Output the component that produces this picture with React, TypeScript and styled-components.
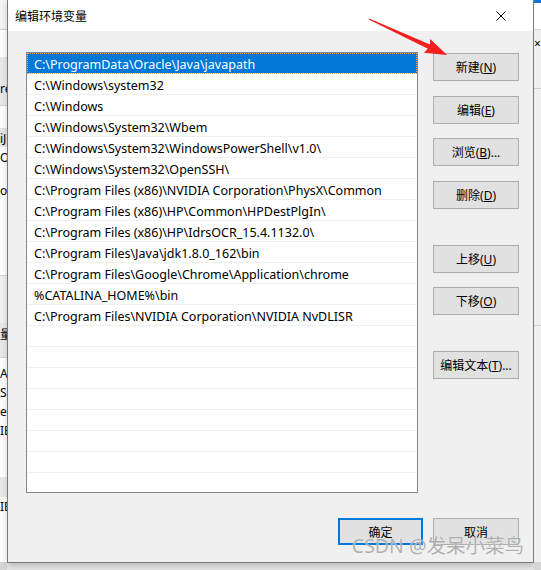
import React from "react";
import styled, { createGlobalStyle } from "styled-components";

const GlobalStyle = createGlobalStyle`
  html, body {
    margin: 0;
    padding: 0;
    background: #e6e6e6;
  }
  body {
    font-family: "Noto Sans", "Noto Sans CJK SC", sans-serif;
    font-size: 12px;
    color: #000000;
  }
`;

const paths = [
  "C:\\ProgramData\\Oracle\\Java\\javapath",
  "C:\\Windows\\system32",
  "C:\\Windows",
  "C:\\Windows\\System32\\Wbem",
  "C:\\Windows\\System32\\WindowsPowerShell\\v1.0\\",
  "C:\\Windows\\System32\\OpenSSH\\",
  "C:\\Program Files (x86)\\NVIDIA Corporation\\PhysX\\Common",
  "C:\\Program Files (x86)\\HP\\Common\\HPDestPlgIn\\",
  "C:\\Program Files (x86)\\HP\\IdrsOCR_15.4.1132.0\\",
  "C:\\Program Files\\Java\\jdk1.8.0_162\\bin",
  "C:\\Program Files\\Google\\Chrome\\Application\\chrome",
  "%CATALINA_HOME%\\bin",
  "C:\\Program Files\\NVIDIA Corporation\\NVIDIA NvDLISR",
];

const sideButtons = [
  { label: "新建", key: "N", suffix: "", top: 1 },
  { label: "编辑", key: "E", suffix: "", top: 15 },
  { label: "浏览", key: "B", suffix: "...", top: 14 },
  { label: "删除", key: "D", suffix: "", top: 15 },
  { label: "上移", key: "U", suffix: "", top: 36 },
  { label: "下移", key: "O", suffix: "", top: 14 },
  { label: "编辑文本", key: "T", suffix: "...", top: 36 },
];

// slivers of the window behind the dialog
const leftSegments = [
  { h: 29, bg: "#f3f3f3", text: "" },
  { h: 1, bg: "#cfcfcf", text: "" },
  { h: 27, bg: "#ffffff", text: "" },
  { h: 48, bg: "#e8e8e8", text: "re", pad: 22 },
  { h: 1, bg: "#d4d4d4", text: "" },
  { h: 22, bg: "#ffffff", text: "" },
  { h: 19, bg: "#e5e5e5", text: "iJ", pad: 1 },
  { h: 22, bg: "#ffffff", text: "Or", pad: 1 },
  { h: 106, bg: "#ffffff", text: "o", pad: 12 },
  { h: 1, bg: "#d4d4d4", text: "" },
  { h: 47, bg: "#f0f0f0", text: "" },
  { h: 34, bg: "#e8e8e8", text: "量", pad: 2 },
  { h: 1, bg: "#d4d4d4", text: "" },
  { h: 119, bg: "#ffffff", text: "AL\nSp\ner\nIE", pad: 6 },
  { h: 20, bg: "#e8e8e8", text: "" },
  { h: 65, bg: "#ffffff", text: "IE", pad: 0 },
  { h: 8, bg: "#d6d6d6", text: "" },
];

const rightSegments = [
  { h: 3, bg: "#0078d7", text: "" },
  { h: 26, bg: "#ffffff", text: "" },
  { h: 1, bg: "#d9d9d9", text: "" },
  { h: 58, bg: "#f0f0f0", text: "×", pad: 4 },
  { h: 1, bg: "#d0d0d0", text: "" },
  { h: 236, bg: "#f0f0f0", text: "" },
  { h: 1, bg: "#d0d0d0", text: "" },
  { h: 236, bg: "#f0f0f0", text: "" },
  { h: 8, bg: "#d6d6d6", text: "" },
];

export default function App() {
  const emptyRows = 21 - paths.length;
  return (
    <>
      <GlobalStyle />
      <Screen>
        <Strip>
          {leftSegments.map((s, i) => (
            <Segment key={i} $h={s.h} $bg={s.bg} $pad={s.pad ?? 0}>
              {s.text}
            </Segment>
          ))}
        </Strip>

        <Dialog>
          <TitleBar>
            <Title>编辑环境变量</Title>
            <CloseBox>
              <svg width="10" height="10" viewBox="0 0 10 10">
                <path d="M0.5 0.5 L9.5 9.5 M9.5 0.5 L0.5 9.5" stroke="#000" strokeWidth="1" />
              </svg>
            </CloseBox>
          </TitleBar>

          <Body>
            <TopRow>
              <ListBox>
                {paths.map((p, i) => (
                  <Row key={p} $selected={i === 0}>
                    {p}
                  </Row>
                ))}
                {Array.from({ length: emptyRows }).map((_, i) => (
                  <Row key={"e" + i} $selected={false} />
                ))}
              </ListBox>
              <SideColumn>
                {sideButtons.map((b) => (
                  <SideButton key={b.label} $top={b.top}>
                    {b.label}(<Key>{b.key}</Key>){b.suffix}
                  </SideButton>
                ))}
              </SideColumn>
            </TopRow>
            <BottomRow>
              <DialogButton $primary>确定</DialogButton>
              <DialogButton>取消</DialogButton>
            </BottomRow>
          </Body>
        </Dialog>

        <Strip>
          {rightSegments.map((s, i) => (
            <Segment key={i} $h={s.h} $bg={s.bg} $pad={s.pad ?? 0}>
              {s.text}
            </Segment>
          ))}
        </Strip>

        <Arrow width="541" height="80" viewBox="0 0 541 80">
          <g transform="translate(369 19) rotate(24.8)">
            <polygon
              points="0,-0.6 66,-2.4 64,-7.5 86,0 64,7.5 66,2.4 0,0.6"
              fill="#f51e1e"
            />
          </g>
        </Arrow>

        <Watermark>CSDN @发呆小菜鸟</Watermark>
      </Screen>
    </>
  );
}

const Screen = styled.div`
  position: relative;
  display: flex;
  align-items: flex-start;
  width: 541px;
  height: 570px;
  overflow: hidden;
  background: #e6e6e6;
`;

const Strip = styled.div`
  display: flex;
  flex-direction: column;
  width: 7px;
  height: 570px;
  flex-shrink: 0;
  overflow: hidden;
`;

const Segment = styled.div<{ $h: number; $bg: string; $pad: number }>`
  height: ${(p) => p.$h}px;
  flex-shrink: 0;
  background: ${(p) => p.$bg};
  padding-top: ${(p) => p.$pad}px;
  box-sizing: border-box;
  font-size: 12px;
  line-height: 19px;
  white-space: pre;
  overflow: hidden;
  color: #000;
`;

const Dialog = styled.div`
  display: flex;
  flex-direction: column;
  width: 527px;
  height: 563px;
  flex-shrink: 0;
  box-sizing: border-box;
  border: 1px solid #7a7a7a;
  border-top: none;
  background: #f0f0f0;
  box-shadow: 0 3px 6px rgba(0, 0, 0, 0.18);
`;

const TitleBar = styled.div`
  display: flex;
  align-items: center;
  justify-content: space-between;
  height: 31px;
  flex-shrink: 0;
  background: #ffffff;
  padding-left: 7px;
`;

const Title = styled.span`
  font-family: "Noto Sans CJK SC", sans-serif;
  font-size: 12px;
  color: #000;
  margin-top: -1px;
`;

const CloseBox = styled.div`
  display: flex;
  align-items: center;
  justify-content: center;
  width: 46px;
  height: 31px;
  margin-right: 9px;
`;

const Body = styled.div`
  display: flex;
  flex-direction: column;
  padding: 21px 14px 0 18px;
`;

const TopRow = styled.div`
  display: flex;
  align-items: flex-start;
  gap: 15px;
`;

const ListBox = styled.div`
  width: 392px;
  height: 441px;
  box-sizing: border-box;
  border: 1px solid #828790;
  background: #ffffff;
  overflow: hidden;
`;

const Row = styled.div<{ $selected: boolean }>`
  height: 21px;
  box-sizing: border-box;
  padding: 2px 0 0 7px;
  border-bottom: 1px solid #f0f0f0;
  line-height: 20px;
  font-size: 12.5px;
  white-space: nowrap;
  color: ${(p) => (p.$selected ? "#ffffff" : "#000000")};
  background: ${(p) => (p.$selected ? "#0078d7" : "#ffffff")};
  outline: ${(p) => (p.$selected ? "1px dotted #f7a14a" : "none")};
  outline-offset: -1px;
`;

const SideColumn = styled.div`
  display: flex;
  flex-direction: column;
  width: 86px;
`;

const SideButton = styled.div<{ $top: number }>`
  display: flex;
  align-items: center;
  justify-content: center;
  height: 28px;
  margin-top: ${(p) => p.$top}px;
  box-sizing: border-box;
  border: 1px solid #adadad;
  background: #e1e1e1;
  font-size: 12px;
  color: #000;
`;

const Key = styled.span`
  text-decoration: underline;
`;

const BottomRow = styled.div`
  display: flex;
  justify-content: flex-end;
  gap: 10px;
  margin-top: 25px;
`;

const DialogButton = styled.div<{ $primary?: boolean }>`
  display: flex;
  align-items: center;
  justify-content: center;
  width: ${(p) => (p.$primary ? 85 : 86)}px;
  height: 27px;
  box-sizing: border-box;
  border: ${(p) => (p.$primary ? "2px solid #0078d7" : "1px solid #adadad")};
  background: #e1e1e1;
  font-family: "Noto Sans CJK SC", sans-serif;
  font-size: 12px;
  color: #000;
`;

const Arrow = styled.svg`
  position: absolute;
  left: 0;
  top: 0;
  pointer-events: none;
`;

const Watermark = styled.div`
  position: absolute;
  right: 17px;
  bottom: 13px;
  font-family: "Noto Sans", "Noto Sans CJK SC", sans-serif;
  font-size: 19.5px;
  line-height: 22px;
  color: rgba(150, 150, 150, 0.75);
  text-shadow: 0 0 1px rgba(255, 255, 255, 0.9);
  pointer-events: none;
  white-space: nowrap;
`;
